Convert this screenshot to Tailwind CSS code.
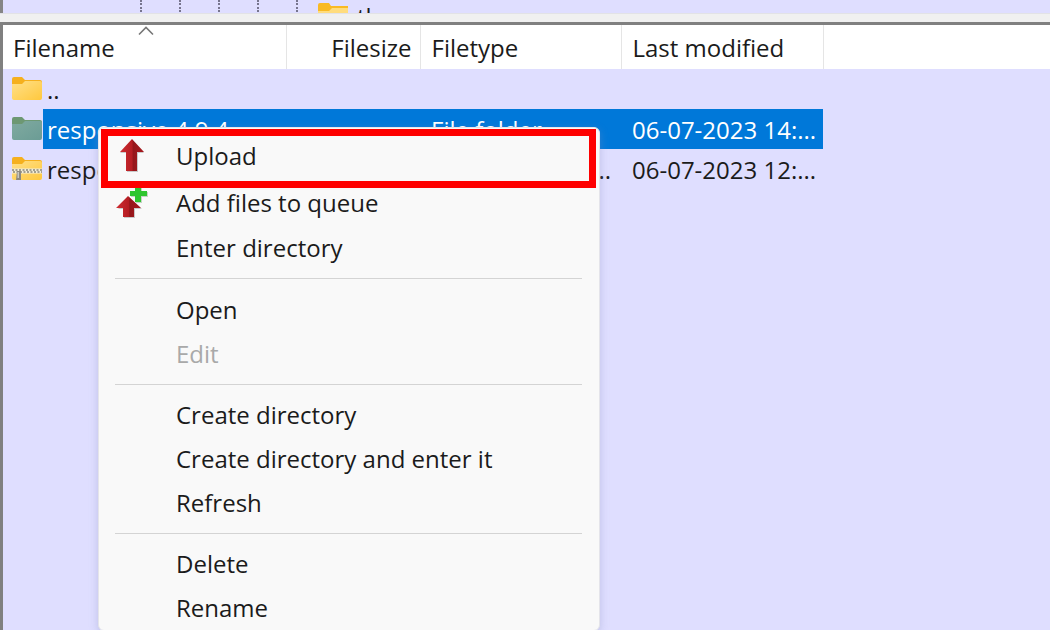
<!DOCTYPE html>
<html lang="en">
<head>
<meta charset="utf-8">
<meta name="viewport" content="width=device-width, initial-scale=1">
<title>Local site</title>
<script src="https://cdn.jsdelivr.net/npm/@tailwindcss/browser@4"></script>
</head>
<body class="bg-[#dfdeff] font-['Open_Sans','Segoe_UI',sans-serif] text-2xl leading-8 text-[#1b1b1b]">
<div class="flex h-screen flex-col overflow-hidden">
  <!-- Directory tree, scrolled so that only the top of one node shows -->
  <section class="flex h-[13px] shrink-0 items-start overflow-hidden border-l-3 border-[#858585] pl-[137px]" aria-label="Directory tree">
    <div class="flex h-3 gap-[37px]">
      <i class="border-l-2 border-dotted border-[#77758e]"></i>
      <i class="border-l-2 border-dotted border-[#77758e]"></i>
      <i class="border-l-2 border-dotted border-[#77758e]"></i>
      <i class="border-l-2 border-dotted border-[#77758e]"></i>
      <i class="border-l-2 border-dotted border-[#77758e]"></i>
    </div>
    <svg class="mt-[3px] ml-[19px] h-[26px] w-8 shrink-0" viewBox="0 0 32 26"><path d="M1 2Q1 0 3 0H12L14 3H31V24H1Z" fill="#f9ba24"/><path d="M1 8H12L15 5H31V24H1Z" fill="#ffdc7d"/></svg>
    <span class="ml-2 pt-px leading-8">th</span>
  </section>
  <div class="h-[9px] shrink-0 border-t border-[#e2e2e6] bg-[#f0f0f0]"></div>

  <!-- File list -->
  <main class="relative flex-1 border-t-3 border-l-3 border-[#808080]">
    <table class="w-full table-fixed border-collapse">
      <colgroup>
        <col class="w-[283px]"><col class="w-[134px]"><col class="w-[201px]"><col class="w-[202px]"><col>
      </colgroup>
      <thead class="bg-white">
        <tr class="h-11 text-left">
          <th class="relative border-r border-[#e5e5e5] pt-[2px] pl-[10px] font-normal" scope="col" aria-sort="ascending">Filename
            <svg class="absolute top-0 left-[135px] h-[11px] w-4" viewBox="0 0 16 11" fill="none" stroke="#777" stroke-width="1.6"><path d="M1 9.500L8 2.500L15 9.500"/></svg>
          </th>
          <th class="border-r border-[#e5e5e5] pt-[2px] pr-2 text-right font-normal" scope="col">Filesize</th>
          <th class="border-r border-[#e5e5e5] pt-[2px] pl-[11px] font-normal" scope="col">Filetype</th>
          <th class="border-r border-[#e5e5e5] pt-[2px] pl-[11px] font-normal" scope="col">Last modified</th>
          <td></td>
        </tr>
      </thead>
      <tbody class="whitespace-nowrap">
        <tr class="h-10">
          <td class="p-0"><div class="flex h-10 items-center pl-2">
            <svg class="mr-1 h-[26px] w-8 shrink-0" viewBox="0 0 32 26"><defs><linearGradient id="gold" x1="0" y1="0" x2="1" y2="1"><stop stop-color="#ffe08a"/><stop offset="1" stop-color="#ffc83d"/></linearGradient></defs><path d="M1 3Q1 1 3 1H11L14 4H29Q31 4 31 6V14H1Z" fill="#f5b01e"/><path d="M1 8H11L14 5H29Q31 5 31 7V22Q31 24 29 24H3Q1 24 1 22Z" fill="url(#gold)"/></svg>
            <span class="pt-[2px]">..</span></div></td>
          <td></td><td></td><td></td><td></td>
        </tr>
        <tr class="h-10 text-white" aria-selected="true">
          <td class="p-0"><div class="flex h-10 items-center pl-2">
            <svg class="h-[26px] w-8 shrink-0" viewBox="0 0 32 26"><defs><linearGradient id="teal" x1="0" y1="0" x2="1" y2="1"><stop stop-color="#80aaa0"/><stop offset="1" stop-color="#6b9c95"/></linearGradient></defs><path d="M1 3Q1 1 3 1H11L14 4H29Q31 4 31 6V14H1Z" fill="#6d9873"/><path d="M1 8H11L14 5H29Q31 5 31 7V22Q31 24 29 24H3Q1 24 1 22Z" fill="url(#teal)"/></svg>
            <span class="flex h-10 flex-1 items-center bg-[#0078d9] pt-[2px] pl-1">responsive.4.9.4</span></div></td>
          <td class="bg-[#0078d9]"></td>
          <td class="bg-[#0078d9] p-0 pt-[2px] pl-[11px]">File folder</td>
          <td class="bg-[#0078d9] p-0 pt-[2px] pl-[11px]">06-07-2023 14:...</td>
          <td></td>
        </tr>
        <tr class="h-10">
          <td class="p-0"><div class="flex h-10 items-center pl-2">
            <svg class="mr-1 h-[26px] w-8 shrink-0" viewBox="0 0 32 26"><path d="M1 3Q1 1 3 1H11L14 4H29Q31 4 31 6V14H1Z" fill="#f5b01e"/><path d="M1 8H11L14 5H29Q31 5 31 7V22Q31 24 29 24H3Q1 24 1 22Z" fill="url(#gold)"/><path d="M1 15H31" stroke="#f3ecd6" stroke-width="5"/><path d="M1 14H31M2 16H31" stroke="#8b8778" stroke-width="1.500" stroke-dasharray="2 1.500"/><path d="M6 15H10V24H5Z" fill="#8d8a80"/><path d="M6.500 16H8V22H6.500Z" fill="#c9c7bf"/></svg>
            <span class="pt-[2px]">responsive.4.9.4.zip</span></div></td>
          <td></td>
          <td class="p-0 pt-[2px] pr-[10px] text-right">Compressed (z...</td>
          <td class="p-0 pt-[2px] pl-[11px]">06-07-2023 12:...</td>
          <td></td>
        </tr>
      </tbody>
    </table>

    <!-- Context menu floating over the list -->
    <div role="menu" class="absolute top-[102px] left-[95px] flex w-[502px] flex-col rounded-md border border-[#e4e4ea] bg-[#f9f9f9] pt-1 shadow-[0_3px_8px_#8890c060]">
      <button role="menuitem" class="flex h-12 shrink-0 items-center pl-5 text-left">
        <svg class="mr-[31px] h-9 w-[26px]" viewBox="0 0 26 36"><defs><linearGradient id="red" x1="0" x2="1"><stop stop-color="#cf2d32"/><stop offset=".5" stop-color="#b51d23"/><stop offset=".55" stop-color="#94171b"/><stop offset="1" stop-color="#a8191e"/></linearGradient></defs><path d="M13 2L25 15H19V34H8V15H1Z" fill="#c9c9c9"/><path d="M13 1L25 14H18V33H7V14H1Z" fill="url(#red)"/></svg>Upload</button>
      <button role="menuitem" class="flex h-[46px] shrink-0 items-center pl-4 text-left">
        <svg class="mr-[27px] h-9 w-[34px]" viewBox="0 0 34 36"><path d="M14 12L27 24H20V33H9V24H3Z" fill="#c9c9c9"/><path d="M13 11L26 23H19V32H8V23H1Z" fill="url(#red)"/><path d="M21 2H27V7H33V12H27V18H21V12H16V7H21Z" fill="#c5d4c5"/><path d="M20 1H26V6H32V11H26V17H20V11H15V6H20Z" fill="#2fc52f"/></svg>Add files to queue</button>
      <button role="menuitem" class="h-11 shrink-0 pl-[77px] text-left">Enter directory</button>
      <hr class="mt-2 mr-[17px] mb-[9px] ml-4 border-[#d4d4d4]">
      <button role="menuitem" class="h-11 shrink-0 pl-[77px] text-left">Open</button>
      <button role="menuitem" disabled class="h-11 shrink-0 pl-[77px] text-left text-[#a9a9a9]">Edit</button>
      <hr class="my-2 mr-[17px] ml-4 border-[#d4d4d4]">
      <button role="menuitem" class="h-11 shrink-0 pl-[77px] text-left">Create directory</button>
      <button role="menuitem" class="h-11 shrink-0 pl-[77px] text-left">Create directory and enter it</button>
      <button role="menuitem" class="h-11 shrink-0 pl-[77px] text-left">Refresh</button>
      <hr class="my-2 mr-[17px] ml-4 border-[#d4d4d4]">
      <button role="menuitem" class="h-11 shrink-0 pl-[77px] text-left">Delete</button>
      <button role="menuitem" class="h-11 shrink-0 pl-[77px] text-left">Rename</button>
      <!-- Highlight around the Upload command -->
      <div class="pointer-events-none absolute top-[1px] right-[3px] left-[2px] h-[59px] border-7 border-[#fe0000]"></div>
    </div>
  </main>
</div>
</body>
</html>
